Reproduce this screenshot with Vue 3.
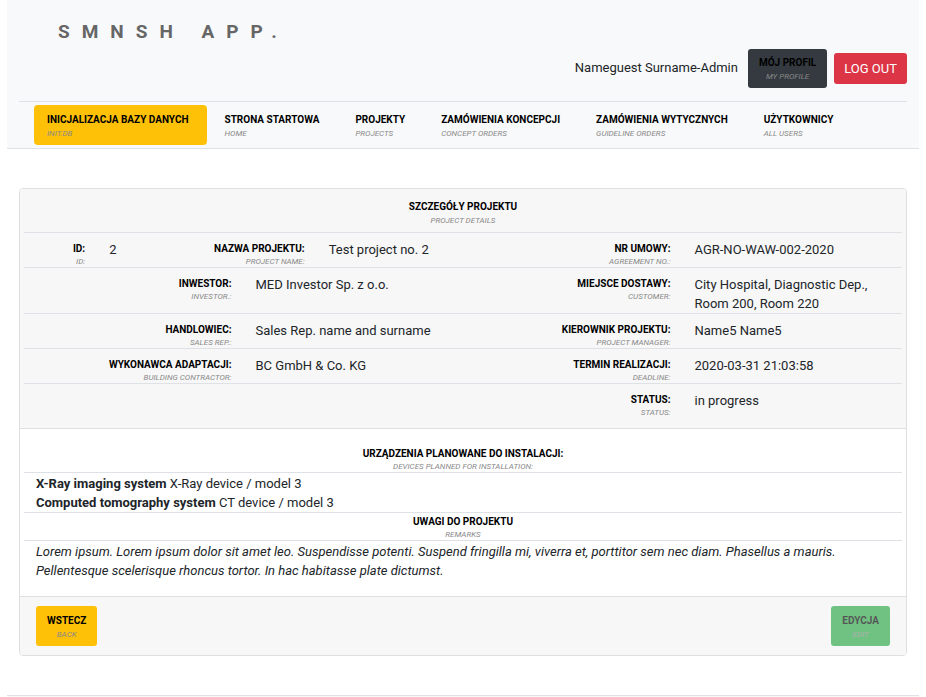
<script setup>
const navItems = [
  { pl: 'INICJALIZACJA BAZY DANYCH', en: 'INIT.DB', active: true },
  { pl: 'STRONA STARTOWA', en: 'HOME' },
  { pl: 'PROJEKTY', en: 'PROJECTS' },
  { pl: 'ZAMÓWIENIA KONCEPCJI', en: 'CONCEPT ORDERS' },
  { pl: 'ZAMÓWIENIA WYTYCZNYCH', en: 'GUIDELINE ORDERS' },
  { pl: 'UŻYTKOWNICY', en: 'ALL USERS' },
]

const rows = [
  [
    { pl: 'ID:', en: 'ID:', value: '2', cols: ['span-1', 'span-1'] },
    { pl: 'NAZWA PROJEKTU:', en: 'PROJECT NAME:', value: 'Test project no. 2', cols: ['span-2', 'span-3'] },
    { pl: 'NR UMOWY:', en: 'AGREEMENT NO.:', value: 'AGR-NO-WAW-002-2020', cols: ['span-2', 'span-3'] },
  ],
  [
    { pl: 'INWESTOR:', en: 'INVESTOR.:', value: 'MED Investor Sp. z o.o.', cols: ['span-3', 'span-3'] },
    { pl: 'MIEJSCE DOSTAWY:', en: 'CUSTOMER:', value: 'City Hospital, Diagnostic Dep., Room 200, Room 220', cols: ['span-3', 'span-3'] },
  ],
  [
    { pl: 'HANDLOWIEC:', en: 'SALES REP.:', value: 'Sales Rep. name and surname', cols: ['span-3', 'span-3'] },
    { pl: 'KIEROWNIK PROJEKTU:', en: 'PROJECT MANAGER:', value: 'Name5 Name5', cols: ['span-3', 'span-3'] },
  ],
  [
    { pl: 'WYKONAWCA ADAPTACJI:', en: 'BUILDING CONTRACTOR:', value: 'BC GmbH & Co. KG', cols: ['span-3', 'span-3'] },
    { pl: 'TERMIN REALIZACJI:', en: 'DEADLINE:', value: '2020-03-31 21:03:58', cols: ['span-3', 'span-3'] },
  ],
  [{ pl: 'STATUS:', en: 'STATUS:', value: 'in progress', cols: ['span-9', 'span-3'] }],
]

const devices = [
  { type: 'X-Ray imaging system', model: 'X-Ray device / model 3' },
  { type: 'Computed tomography system', model: 'CT device / model 3' },
]
</script>

<template>
  <div class="page">
    <header class="top">
      <h1 class="brand">SMNSH APP.</h1>
      <div class="account">
        <span class="user">Nameguest Surname-Admin</span>
        <button type="button" class="btn profile">
          <span class="pl">MÓJ PROFIL</span>
          <span class="en">MY PROFILE</span>
        </button>
        <button type="button" class="btn logout">LOG OUT</button>
      </div>
      <nav class="nav">
        <a v-for="item in navItems" :key="item.en" href="#" class="nav-link" :class="{ active: item.active }">
          <span class="pl">{{ item.pl }}</span>
          <span class="en">{{ item.en }}</span>
        </a>
      </nav>
    </header>

    <main class="card">
      <section class="card-header">
        <h2 class="title">
          <span class="pl">SZCZEGÓŁY PROJEKTU</span>
          <span class="en">PROJECT DETAILS</span>
        </h2>
        <dl v-for="(row, i) in rows" :key="i" class="row">
          <template v-for="field in row" :key="field.pl">
            <dt class="label" :class="field.cols[0]">
              <span class="pl">{{ field.pl }}</span>
              <span class="en">{{ field.en }}</span>
            </dt>
            <dd class="value" :class="field.cols[1]">{{ field.value }}</dd>
          </template>
        </dl>
      </section>

      <section class="card-body">
        <h3 class="subtitle">
          <span class="pl">URZĄDZENIA PLANOWANE DO INSTALACJI:</span>
          <span class="en">DEVICES PLANNED FOR INSTALLATION:</span>
        </h3>
        <ul class="text devices">
          <li v-for="d in devices" :key="d.type"><strong>{{ d.type }}</strong> {{ d.model }}</li>
        </ul>
        <h3 class="subtitle">
          <span class="pl">UWAGI DO PROJEKTU</span>
          <span class="en">REMARKS</span>
        </h3>
        <p class="text remarks">
          Lorem ipsum. Lorem ipsum dolor sit amet leo. Suspendisse potenti. Suspend fringilla mi, viverra et,
          porttitor sem nec diam. Phasellus a mauris. Pellentesque scelerisque rhoncus tortor. In hac habitasse
          plate dictumst.
        </p>
      </section>

      <section class="card-footer">
        <button type="button" class="btn back">
          <span class="pl">WSTECZ</span>
          <span class="en">BACK</span>
        </button>
        <button type="button" class="btn edit" disabled>
          <span class="pl">EDYCJA</span>
          <span class="en">EDIT</span>
        </button>
      </section>
    </main>

    <footer class="bottom"></footer>
  </div>
</template>

<style>
body {
  margin: 0;
  background: #fff;
}
</style>

<style scoped>
.page {
  padding: 0 7px;
  font-family: Roboto, "Liberation Sans", sans-serif;
  font-size: 13px;
  line-height: 19px;
  color: #212529;
}
h1, h2, h3, p, dl, dd, ul {
  margin: 0;
  padding: 0;
}
.pl,
.en {
  display: block;
}
.pl {
  font-size: 10px;
  line-height: 14px;
  font-weight: 700;
  color: #000;
}
.en {
  font-size: 8px;
  line-height: 14px;
  font-weight: 400;
  font-style: italic;
  color: #888;
}
.top {
  padding: 17px 12px 0;
  background: #f8f9fa;
  border-bottom: 1px solid #dee2e6;
}
.brand {
  padding-left: 39px;
  font-size: 19px;
  line-height: 30px;
  font-weight: 700;
  letter-spacing: 12px;
  color: #666;
}
.account {
  display: flex;
  justify-content: flex-end;
  align-items: center;
  padding: 2px 0 13px;
}
.user {
  margin-right: 10px;
  padding-bottom: 2px;
}
.btn {
  border: 0;
  border-radius: 3px;
  font-family: inherit;
  font-size: 13px;
  line-height: 19px;
  text-align: center;
  cursor: pointer;
}
.profile {
  margin-right: 7px;
  padding: 7px 11px 4px;
  background: #343a40;
}
.logout {
  padding: 6px 10px;
  background: #dc3545;
  color: #fff;
}
.nav {
  display: flex;
  gap: 5px;
  padding: 3px 15px;
  border-top: 1px solid #dee2e6;
}
.nav-link {
  padding: 8px 18px 4px 13px;
  border-radius: 4px;
  text-decoration: none;
  white-space: nowrap;
}
.active {
  background: #ffc107;
}
.card {
  margin: 39px 12px;
  border: 1px solid #dfdfdf;
  border-radius: 4px;
  overflow: hidden;
}
.card-header {
  padding: 11px 4px 10px;
  background: #f7f7f7;
  border-bottom: 1px solid #dfdfdf;
}
.title {
  padding-bottom: 4px;
  text-align: center;
}
.row {
  display: grid;
  grid-template-columns: repeat(12, minmax(0, 1fr));
  border-top: 1px solid #dee2e6;
}
.label {
  padding: 8px 12px 0;
  text-align: right;
}
.label .pl,
.subtitle .pl {
  line-height: 15px;
}
.label .en,
.subtitle .en {
  line-height: 11px;
}
.value {
  padding: 7px 12px 0;
}
.span-1 { grid-column: span 1; }
.span-2 { grid-column: span 2; }
.span-3 { grid-column: span 3; }
.span-9 { grid-column: span 9; }
.card-body {
  padding: 16px 4px;
}
.subtitle {
  padding-top: 1px;
  border-bottom: 1px solid #dee2e6;
  text-align: center;
}
.text {
  padding: 1px 12px 0;
}
.devices {
  list-style: none;
  border-bottom: 1px solid #dee2e6;
}
.remarks {
  font-style: italic;
}
.card-footer {
  display: flex;
  justify-content: space-between;
  padding: 9px 16px;
  background: #f7f7f7;
  border-top: 1px solid #dfdfdf;
}
.back,
.edit {
  padding: 8px 11px 4px;
}
.back {
  background: #ffc107;
}
.edit {
  background: #28a745;
  opacity: 0.65;
}
.bottom {
  min-height: 1px;
  border-top: 1px solid #dee2e6;
  background: #f8f9fa;
}
</style>
